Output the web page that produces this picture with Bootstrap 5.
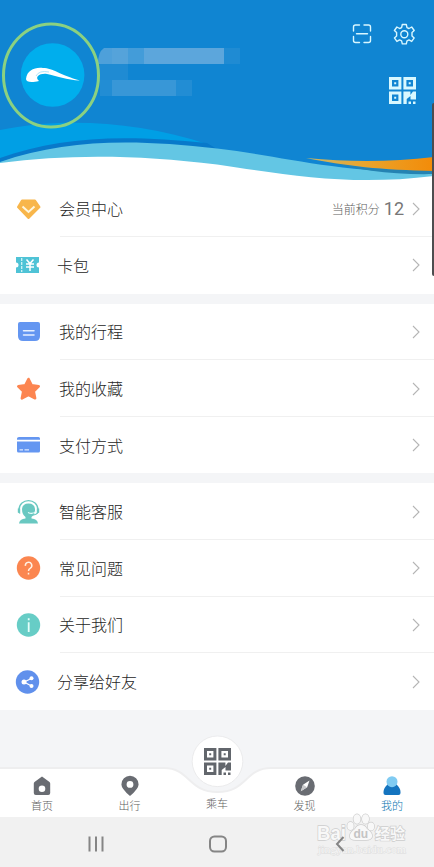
<!DOCTYPE html>
<html lang="zh-CN">
<head>
<meta charset="utf-8">
<meta name="viewport" content="width=device-width, initial-scale=1">
<title>我的</title>
<link href="https://cdn.jsdelivr.net/npm/bootstrap@5.3.0/dist/css/bootstrap.min.css" rel="stylesheet">
<style>
body{font-family:"Noto Sans CJK SC",sans-serif;font-weight:300;color:#262626;background:#f4f5f7}
.screen{width:434px;height:867px}
.hero{height:180.5px}
.hero svg{display:block}
.menu-row{height:56.6px;padding:0 14px 0 16px;font-size:16px;line-height:24px;border:0}
.menu-row>span:not(.points){padding-bottom:1px}
.menu-row>svg:first-child{width:25px;height:26px;flex:none;margin-right:18px}
.menu-row.nudge>svg:first-child{margin-left:-1px;margin-right:17px}
.menu-row+.menu-row::before{content:"";position:absolute;top:-1px;left:60px;right:0;height:1px;background:#f0f0f0}
.chev{width:8px;height:14px;fill:none;stroke:#b5b5b5;stroke-width:1.1}
.points{font-size:12px;color:#606060;margin-right:8px}
.points b{font:400 18px Roboto,sans-serif;color:#777;margin-left:4px;vertical-align:-1.5px}
.gap-a{height:10px}
.tabs{height:107.1px}
.tab-item{width:87.5px;flex:none;font-size:11px;line-height:16px;color:#606060}
.tab-item svg{width:22px;height:22px}
.tab-item .ride{width:27px;height:27px;margin-bottom:20px}
.tab-item .ride+span{padding-bottom:2px}
.tab-item.active{color:#0a74b0}
.tab-row{padding-bottom:4px}
.sysbar{height:50px;background:#f1f1f1}
.edge{left:432px;top:103px;width:3px;height:173px;background:#4d4d4f;border-radius:2px 0 0 2px}
.watermark{left:310px;top:808px}
</style>
</head>
<body>
<svg width="0" height="0" class="position-absolute">
<defs>
<symbol id="qr" viewBox="0 0 27 27"><path fill="currentColor" fill-rule="evenodd" d="M0 0h12.400v12.400H0zM3 3v6.400h6.400V3zM14.400 0H27v12.400H14.400zM17.400 3v6.400H24V3zM0 14.600h12.400V27H0zM3 17.600V24h6.400v-6.400zM14.400 14.600h7v3.400l2.600-3.400h3v7.900h-5.500v-3.500l-3.800 3V27h-3.300zM5.200 5.200h2v2h-2zM19.700 5.200h2v2h-2zM5.200 19.800h2v2h-2zM19.500 24.500h2.500V27h-2.500zM24 24.500h2.500V27H24z"/></symbol>
<symbol id="chev" viewBox="0 0 8 14"><path d="M1 1l6 6-6 6"/></symbol>
</defs>
</svg>
<main class="screen position-relative overflow-hidden d-flex flex-column">
<header class="hero flex-shrink-0 bg-white">
<svg width="434" height="182" viewBox="0 0 434 182">
<defs><linearGradient id="or"><stop stop-color="#c9b767"/><stop offset=".45" stop-color="#e9a52e"/><stop offset="1" stop-color="#f38b08"/></linearGradient></defs>
<path fill="#1085d2" d="M0 0H434V182H0z"/>
<path fill="#009fe5" d="M0 130C60 117 139 121 207 144C120 135 59 138 0 159z"/>
<path fill="#0879ca" d="M0 158C59 137 120 134 207 143L217 149C120 140 60 142 0 162z"/>
<path fill="#63c6e4" d="M0 162C67 139 133 139 217 148.500C282 156 332 172 434 173V182H0z"/>
<path fill="#fff" d="M0 163C69 154 139 155 217 164.500C294 176 352 186 434 176V182H0z"/>
<path fill="#2583b2" d="M325 161C361 169 392 171 434 170V174C394 175 356 170 325 161z"/>
<path fill="url(#or)" d="M306 158C350 162 391 162 434 157V171C382 170 345 166 306 158z"/>
<g fill="#8bbce2"><path opacity=".5" d="M104 48h24v16H98q0-12 6-16z"/><path opacity=".12" d="M112 48h16v16h-16z"/><path opacity=".42" d="M128 48h16v16h-16z"/><path opacity=".62" d="M144 48h80v16h-80z"/><path opacity=".12" d="M224 48h16v16h-16zM100 64h28v16h-28z"/><path opacity=".33" d="M112 80h64v16h-64z"/><path opacity=".15" d="M100 80h12v16h-12zM176 80h16v16h-16z"/></g>
<circle cx="52.600" cy="75" r="31.800" fill="#00aeed"/>
<path fill="#fff" d="M26 79C27 70 35 67 43 68C53 68 60 75 80 80.500C67 80 56 76 47 74C40 73 34 77 39 81C31 83 26 82 26 79z"/>
<path d="M36 76Q39 70 49 72" fill="none" stroke="#8cd8f4" stroke-width=".7"/>
<ellipse cx="51" cy="75.500" rx="47.500" ry="51.500" fill="none" stroke="#8bd181" stroke-width="3"/>
<g fill="none" stroke="#d9f7ff" stroke-width="1.400" stroke-linecap="round"><path d="M353.500 31V27q0-2 2-2h4M364 25h4.500q2 0 2 2v4M370.500 36.500v4q0 2-2 2H364M359.500 42.500h-4q-2 0-2-2v-4M356.500 33.700h11"/>
<circle cx="404.300" cy="34.200" r="3.500"/><path stroke-linejoin="round" d="M402.300 24.500h4l.7 3.100 2 .9 2.700-1.500 2.500 3.500-2.200 2v3.400l2.200 2-2.500 3.500-2.700-1.500-2 .9-.7 3.100h-4l-.7-3.100-2-.9-2.700 1.500-2.500-3.500 2.200-2v-3.400l-2.200-2 2.500-3.500 2.700 1.500 2-.9z"/></g>
<use href="#qr" x="389" y="77" width="27" height="27" color="#d8f8ff"/>
</svg>
</header>

<section class="list-group list-group-flush bg-white flex-shrink-0">
<a class="menu-row list-group-item d-flex align-items-center text-reset text-decoration-none">
<svg viewBox="0 0 25 26"><path fill="#f8b64b" stroke="#f8b64b" stroke-width="2" stroke-linejoin="round" d="M6 4.500h13l4.500 6.500-11 11L2 11z"/><path d="M6.500 10.500l6 5.500 6-5.500" fill="none" stroke="#fff6dc" stroke-width="2"/></svg>
<span>会员中心</span><span class="points ms-auto">当前积分<b>12</b></span><svg class="chev"><use href="#chev"/></svg></a>
<a class="menu-row nudge list-group-item d-flex align-items-center text-reset text-decoration-none">
<svg viewBox="0 0 25 26"><path fill="#4fc3d6" d="M1 5h23v5.500a2.500 2.500 0 0 0 0 5V21H1v-5.500a2.500 2.500 0 0 0 0-5z"/><path d="M6.700 6v14" stroke="#cff3f5" stroke-width="1.300" stroke-dasharray="3 1"/><path d="M11.500 7.500l3.500 4 3.500-4M15 11.500V19M11 12h8M11 15h8" fill="none" stroke="#fff" stroke-width="1.500"/></svg>
<span>卡包</span><svg class="chev ms-auto"><use href="#chev"/></svg></a>
</section>
<div class="gap-a flex-shrink-0"></div>
<section class="list-group list-group-flush bg-white flex-shrink-0">
<a class="menu-row list-group-item d-flex align-items-center text-reset text-decoration-none">
<svg viewBox="0 0 25 26"><path fill="#6496f1" d="M4 3h18q2 0 2 2v12q0 5-5 5H7q-5 0-5-5V5q0-2 2-2z"/><path d="M7.500 11.700h10.500M7.500 16h10.500" stroke="#e6f0ff" stroke-width="1.500" stroke-linecap="round"/></svg>
<span>我的行程</span><svg class="chev ms-auto"><use href="#chev"/></svg></a>
<a class="menu-row list-group-item d-flex align-items-center text-reset text-decoration-none">
<svg viewBox="0 0 25 26"><path fill="#fc8550" stroke="#fc8550" stroke-width="2.600" stroke-linejoin="round" d="M12.500 3l3.200 6.300 7 1-5 5 1.400 7-6.600-3.500-6.600 3.500 1.400-7-5-5 7-1z"/></svg>
<span>我的收藏</span><svg class="chev ms-auto"><use href="#chev"/></svg></a>
<a class="menu-row list-group-item d-flex align-items-center text-reset text-decoration-none">
<svg viewBox="0 0 25 26"><path fill="#6496f1" d="M3 5h19.500q1.500 0 1.500 1.500v1.300H1V6.500Q1 5 3 5zM1 9.600h23V19q0 1.500-1.500 1.500h-20Q1 20.500 1 19z"/><path d="M3.500 17.800h3.500M8.500 17.800h4.500" stroke="#dce8ff" stroke-width="1.300"/></svg>
<span>支付方式</span><svg class="chev ms-auto"><use href="#chev"/></svg></a>
</section>
<div class="gap-a flex-shrink-0"></div>
<section class="list-group list-group-flush bg-white flex-shrink-0">
<a class="menu-row list-group-item d-flex align-items-center text-reset text-decoration-none">
<svg viewBox="0 0 25 26"><path d="M3 11C3 -1.500 22 -1.500 22 11v1.500q-.5 3.500-6 3.500" fill="none" stroke="#69c8c1" stroke-width="1.300"/><path fill="#69c8c1" d="M1.800 9.500h2.400V15L1.800 13.500zM20.800 9.500h2.400v4L20.800 15zM6 10Q6.500 4.500 12.500 4.500T19 10v2.500Q18.500 16 15.500 18v1.500q6 .5 6.500 5H3q.5-4.500 6.500-5V18Q6 15.500 6 10z"/><path d="M12 13.500q5 2.500 8-1.500" fill="none" stroke="#e8fffc" stroke-width="1.200"/></svg>
<span>智能客服</span><svg class="chev ms-auto"><use href="#chev"/></svg></a>
<a class="menu-row list-group-item d-flex align-items-center text-reset text-decoration-none">
<svg viewBox="0 0 25 26"><circle cx="12.500" cy="13" r="11.700" fill="#fb8650"/><path d="M9.400 10.800a3.200 3.200 0 1 1 5 2.300q-1.900 1.200-1.900 3M12.500 17.700v1.700" fill="none" stroke="#fff1e4" stroke-width="1.500"/></svg>
<span>常见问题</span><svg class="chev ms-auto"><use href="#chev"/></svg></a>
<a class="menu-row list-group-item d-flex align-items-center text-reset text-decoration-none">
<svg viewBox="0 0 25 26"><circle cx="12.500" cy="13" r="11.700" fill="#67cdc6"/><path d="M12.700 6.300v2M12.700 10.200v9.800" stroke="#e5fffb" stroke-width="1.800"/></svg>
<span>关于我们</span><svg class="chev ms-auto"><use href="#chev"/></svg></a>
<a class="menu-row nudge list-group-item d-flex align-items-center text-reset text-decoration-none">
<svg viewBox="0 0 25 26"><circle cx="12.500" cy="13" r="11.700" fill="#6090ec"/><path d="M16.500 9.500L9 13l7.500 4" fill="none" stroke="#fff" stroke-width="1.200"/><g fill="#fff"><circle cx="9" cy="13" r="2.500"/><circle cx="16.500" cy="9.300" r="2"/><circle cx="16.500" cy="16.900" r="2"/></g></svg>
<span>分享给好友</span><svg class="chev ms-auto"><use href="#chev"/></svg></a>
</section>

<nav class="tabs position-relative flex-shrink-0">
<svg class="position-absolute top-0 start-0" width="434" height="107" viewBox="0 1 434 107"><path fill="#fff" stroke="#eeeeef" stroke-width="2" d="M-2 59H164C190 59 188 83 217.500 83S245 59 271 59H436V112H-2z"/><circle cx="217.500" cy="52.300" r="25.300" fill="#fff" stroke="#e7e7e8" stroke-width=".8"/></svg>
<div class="tab-row position-relative d-flex h-100 align-items-end justify-content-center">
<div class="tab-item d-flex flex-column align-items-center"><svg viewBox="0 0 22 22"><path fill="#696c72" fill-rule="evenodd" d="M11 1.500l7.500 5.500q.7.600.7 1.500V18q0 2-2 2H4.800q-2 0-2-2V8.500q0-.9.700-1.500zM11 10.500a3.300 3.300 0 1 0 0 6.600 3.300 3.300 0 0 0 0-6.600z"/></svg><span>首页</span></div>
<div class="tab-item d-flex flex-column align-items-center"><svg viewBox="0 0 22 22"><path fill="#696c72" fill-rule="evenodd" d="M11 21Q2.400 13.500 2.400 9.400a8.600 8.600 0 0 1 17.200 0Q19.600 13.500 11 21zM11 6a3.400 3.400 0 1 0 0 6.800A3.400 3.400 0 0 0 11 6z"/></svg><span>出行</span></div>
<div class="tab-item d-flex flex-column align-items-center"><svg class="ride" viewBox="0 0 27 27"><use href="#qr" width="27" height="27" color="#62666c"/></svg><span>乘车</span></div>
<div class="tab-item d-flex flex-column align-items-center"><svg viewBox="0 0 22 22"><circle cx="11" cy="11" r="9.800" fill="#696c72"/><path d="M15.500 5.500l-2.300 6.800-6.400 4 2.200-6.500z" fill="#fff"/><path d="M9 9.800l4.200 2.500-6.400 4z" fill="#c8c9cb"/></svg><span>发现</span></div>
<div class="tab-item active d-flex flex-column align-items-center"><svg viewBox="0 0 22 22"><path fill="#1474bf" d="M7 9h8q4.500 4 4.500 8v1q0 2-2 2h-13q-2 0-2-2v-1q0-4 4.500-8z"/><circle cx="11" cy="6.700" r="5.500" fill="#80cbf2"/></svg><span>我的</span></div>
</div>
</nav>
<footer class="sysbar flex-shrink-0">
<svg class="d-block" width="434" height="50" viewBox="0 0 434 50" fill="none" stroke="#858585" stroke-width="2"><path d="M89.500 19.500v15M96 19.500v15M102.500 19.500v15"/><rect x="210" y="19.500" width="16" height="15" rx="4.500"/></svg>
</footer>
<div class="edge position-absolute"></div>
<svg class="watermark position-absolute" width="110" height="50" viewBox="310 808 110 50">
<g fill="#f8f8f8" stroke="#cdcdcd" stroke-width="1.400" paint-order="stroke"><text x="317" y="839.500" font-family="Liberation Sans,sans-serif" font-weight="700" font-size="20" textLength="29" lengthAdjust="spacingAndGlyphs">Bai</text><text x="375" y="839" font-size="15" font-weight="700" font-family="Noto Sans CJK SC,sans-serif" textLength="30">经验</text>
<ellipse cx="350.500" cy="826" rx="3.200" ry="4"/><ellipse cx="357" cy="819" rx="3.500" ry="4.800"/><ellipse cx="365.500" cy="819" rx="3.500" ry="4.800"/><ellipse cx="371" cy="826.500" rx="3.200" ry="4"/><path d="M361 825q4 0 6 4 6 4 5 8-1 3-6 3h-10q-6 0-6-3-1-4 5-8 2-4 6-4z"/></g>
<text x="353.500" y="838" font-family="Liberation Sans,sans-serif" font-weight="700" font-size="12" fill="#c4c4c4">du</text>
<text x="318" y="853" font-family="Liberation Serif,serif" font-size="9.500" fill="#f6f6f6" stroke="#dcdcdc" stroke-width=".8" paint-order="stroke" textLength="88" lengthAdjust="spacingAndGlyphs">jingyan.baidu.com</text>
<path d="M343.500 837l-6.500 7 6.500 7" fill="none" stroke="#858585" stroke-width="2"/>
</svg>
</main>
<script src="https://cdn.jsdelivr.net/npm/bootstrap@5.3.0/dist/js/bootstrap.bundle.min.js"></script>
</body>
</html>
